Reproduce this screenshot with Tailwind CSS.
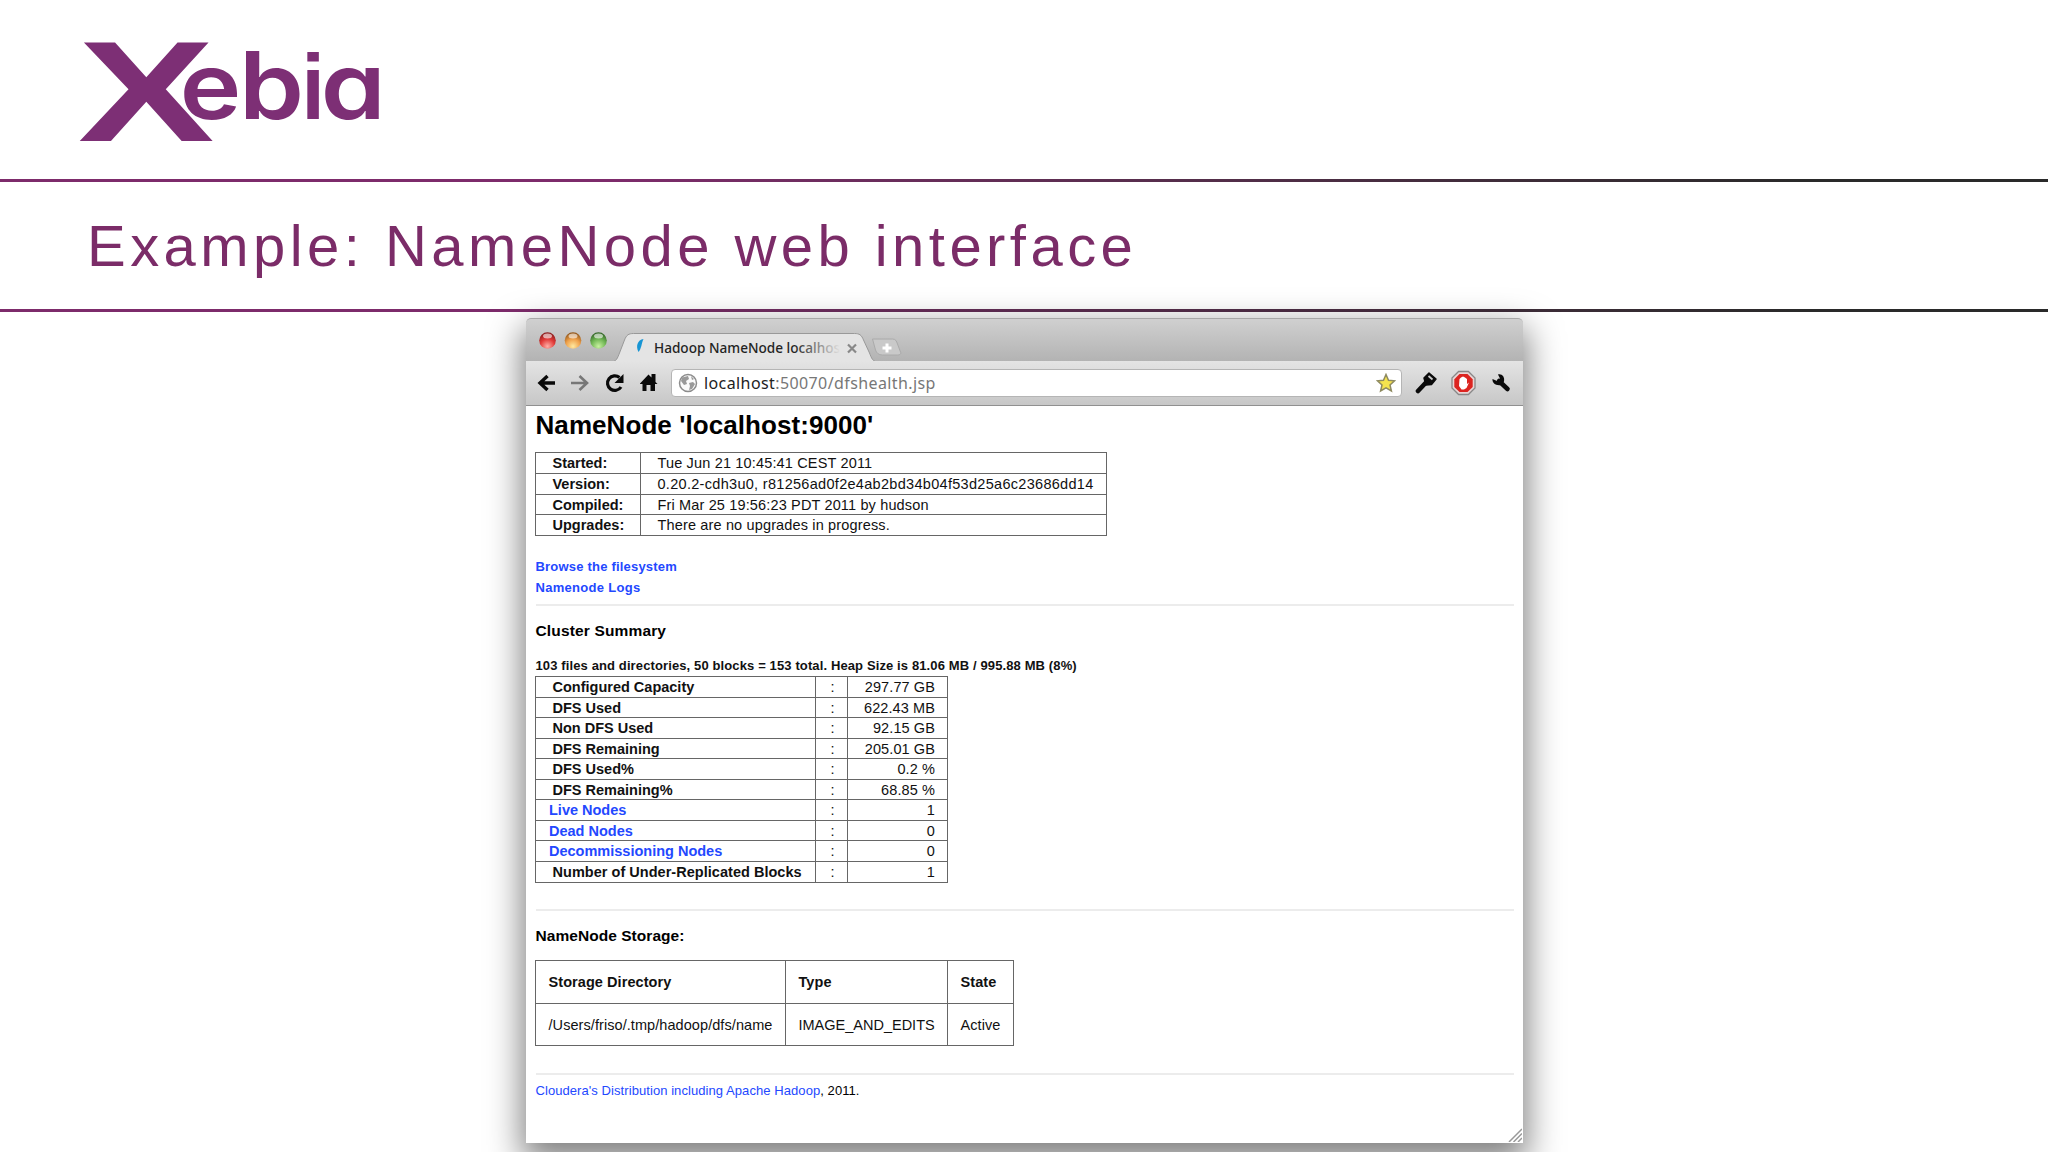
<!DOCTYPE html>
<html lang="en">
  <head>
    <meta charset="UTF-8" />
    <meta name="viewport" content="width=device-width, initial-scale=1.0" />
    <title>Example: NameNode web interface</title>
    <script src="https://cdn.jsdelivr.net/npm/@tailwindcss/browser@4"></script>
  </head>
  <body class="bg-white text-black font-['Liberation_Sans',sans-serif]">
    <div class="w-[2048px] h-[1152px] overflow-hidden flex flex-col">
      <!-- logo -->
      <header class="h-[179px] shrink-0 pl-[60px] pt-5">
        <svg class="w-[360px] h-[140px]" viewBox="0 0 360 140" fill="#7d2f75">
          <text
            transform="translate(18 120.5) scale(1.43 1)"
            font-family="Liberation Sans"
            font-weight="700"
            font-size="143"
          >X</text>
          <text
            transform="translate(0 98.5) scale(1.12 1)"
            x="107 159.800 232.800"
            font-family="Inter"
            font-weight="600"
            font-size="93"
            style="font-feature-settings: 'cv11'"
          >eba</text>
          <text
            transform="translate(241.5 98.5) scale(0.9 1)"
            font-family="Liberation Sans"
            font-weight="700"
            font-size="93"
          >i</text>
        </svg>
      </header>
      <div class="h-[3px] shrink-0 bg-linear-to-r from-[#7d2b6b] from-30% to-[#2a2a2a] to-88%"></div>
      <div class="h-[127px] shrink-0 pl-[87px] pt-[31px]">
        <h1 class="text-[58px] leading-[66px] tracking-[4.45px] text-[#7b2c68] whitespace-nowrap">Example: NameNode web interface</h1>
      </div>
      <div class="h-[3px] shrink-0 bg-linear-to-r from-[#7d2b6b] from-30% to-[#2a2a2a] to-88%"></div>

      <!-- browser window -->
      <main
        class="w-[997px] h-[825px] shrink-0 ml-[525.5px] mt-[6px] rounded-t-[5px] bg-white shadow-[0_14px_34px_4px_rgba(0,0,0,0.5)] flex flex-col relative"
      >
        <div class="h-[43px] rounded-t-[5px] bg-linear-to-b from-[#d0d0d0] to-[#b3b3b3] border-t border-[#a8a8a8]">
          <svg class="w-[400px] h-[43px]" viewBox="525.500 318 400 43">
            <defs>
              <radialGradient id="red" cx=".5" cy=".85" r=".8"><stop offset="0" stop-color="#ffb0a8" /><stop offset=".55" stop-color="#e23a38" /><stop offset="1" stop-color="#8e2020" /></radialGradient>
              <radialGradient id="amber" cx=".5" cy=".85" r=".8"><stop offset="0" stop-color="#ffe9a0" /><stop offset=".55" stop-color="#efa04a" /><stop offset="1" stop-color="#94581c" /></radialGradient>
              <radialGradient id="green" cx=".5" cy=".85" r=".8"><stop offset="0" stop-color="#c8f2a0" /><stop offset=".55" stop-color="#70b654" /><stop offset="1" stop-color="#36692a" /></radialGradient>
              <linearGradient id="fade" x1="654" x2="840" y1="0" y2="0" gradientUnits="userSpaceOnUse"><stop offset=".75" stop-color="#222" /><stop offset="1" stop-color="#222" stop-opacity="0" /></linearGradient>
            </defs>
            <circle cx="547" cy="339.500" r="8.300" fill="url(#red)" />
            <circle cx="572.500" cy="339.500" r="8.300" fill="url(#amber)" />
            <circle cx="598" cy="339.500" r="8.300" fill="url(#green)" />
            <ellipse cx="547" cy="335" rx="4.500" ry="2.500" fill="#fff" opacity=".6" />
            <ellipse cx="572.500" cy="335" rx="4.500" ry="2.500" fill="#fff" opacity=".6" />
            <ellipse cx="598" cy="335" rx="4.500" ry="2.500" fill="#fff" opacity=".6" />
            <path d="M525 361H610C616 361 617 357 619 352L624 339C626 334 628 332.500 633 332.500H854C859 332.500 861 334 863 339L869 352C871 357 872 361 878 361H930V370H525Z" fill="#e4e4e4" stroke="#999" />
            <path d="M872 338H892C895 338 896 340 897 343L900 351C901 353 899 354 897 354H882C878 354 876 352 875 349Z" fill="#c9c9c9" stroke="#aaa" />
            <path d="M886.500 342.500V351.500M882 347H891" stroke="#fff" stroke-width="3" />
            <path d="M643 338C637 339 635 345 638 351C641 348 641 342 643 338Z" fill="#1795d4" />
            <text x="653.500" y="352" font-family="Noto Sans" font-size="13.600" font-weight="500" fill="url(#fade)">Hadoop NameNode localhos</text>
            <path d="M847.500 343.500L855.500 351.500M855.500 343.500L847.500 351.500" stroke="#888" stroke-width="2.200" />
          </svg>
        </div>
        <div class="h-[45px] bg-linear-to-b from-[#e4e4e4] to-[#c7c7c7] border-b border-[#909090] flex items-center pl-[11.5px] pr-3">
          <svg class="w-[127px] h-6 shrink-0" viewBox="537 371 127 24" fill="none">
            <path d="M555 383H541M547.500 376L540 383L547.500 390" stroke="#0a0a0a" stroke-width="3.400" />
            <path d="M571 383H586M579.500 376L587 383L579.500 390" stroke="#777" stroke-width="2.600" />
            <path d="M621 387A7.300 7.300 0 1 1 619.500 377.500" stroke="#0a0a0a" stroke-width="3.200" />
            <path d="M623.500 374V383H614.500Z" fill="#0a0a0a" />
            <path d="M640 383.500L648.500 374.500L651.500 377.500V374H655.500V382L657.500 384H655V391H650.500V385H646.500V391H642.500V384H640Z" fill="#0a0a0a" />
          </svg>
          <div class="w-[731px] h-[28px] ml-[7px] shrink-0 bg-white border border-[#b5b5b5] rounded-[4px] flex items-center pl-[6px] pr-[5px]">
            <svg class="w-5 h-5 shrink-0" viewBox="0 0 20 20">
              <circle cx="10" cy="10" r="8.500" fill="#fafafa" stroke="#8c8c8c" stroke-width="1.500" />
              <path d="M4 4.500L10 3L11 6L8 8L9 11L6 12L3 8ZM11 10L15 9L17 11L14 16L11 17L12 13ZM13 3L16 6L14 7Z" fill="#999" />
            </svg>
            <span class="ml-[6px] grow font-['Noto_Sans',sans-serif] text-[16px] leading-6 tracking-[0.4px] text-[#777]"><span class="text-[#222]">localhost</span>:50070/dfshealth.jsp</span>
            <svg class="w-5 h-5" viewBox="0 0 20 20">
              <path d="M10 1.500L12.500 7.200L18.600 7.800L14 12L15.400 18L10 14.800L4.600 18L6 12L1.400 7.800L7.500 7.200Z" fill="#f5e34e" stroke="#8e8a60" stroke-width="1.500" />
            </svg>
          </div>
          <svg class="w-[98px] h-7 ml-[13px] shrink-0" viewBox="1415 369 98 28">
            <g transform="translate(1415 372)">
              <path d="M3 19L11 10.500" stroke="#0a0a0a" stroke-width="4.600" stroke-linecap="round" />
              <path d="M9 6L14 1L21 7L16.500 12.500L11 13Z" fill="#0a0a0a" stroke="#0a0a0a" stroke-width="1.500" stroke-linejoin="round" />
              <path d="M13.500 4L17.500 7.500" stroke="#ccc" stroke-width="1.800" />
            </g>
            <path d="M1458.600 371.500H1468.400L1475 378.100V387.900L1468.400 394.500H1458.600L1452 387.900V378.100Z" fill="#e9d5d5" stroke="#888" stroke-width="1.300" />
            <path d="M1459.500 374H1467.500L1472.700 379.200V387L1467.500 392H1459.500L1454.300 387V379.200Z" fill="#dc2420" />
            <path d="M1459.500 379L1461 377.500L1463 376.500L1465 377.500L1467 379V384L1469 382.500L1466.500 388L1464 389.500H1461.500L1459 386Z" fill="#fff" />
            <path d="M1499 381L1507.500 389" stroke="#0a0a0a" stroke-width="4.600" stroke-linecap="round" />
            <path d="M1498 374.500C1502 373.500 1505 377 1504 381.500L1501 385C1496 386 1492 383 1492.500 379L1497 381L1500 378.500Z" fill="#0a0a0a" />
          </svg>
        </div>

        <!-- dfshealth page -->
        <div class="grow flex flex-col items-start pl-[10px] pr-[9px] text-[14.5px] whitespace-nowrap">
          <h2 class="mt-[5px] h-[41px] text-[26px] leading-[28px] tracking-[0.07px] font-bold">NameNode 'localhost:9000'</h2>
          <table class="-ml-[0.5px] w-[572px] table-fixed border-collapse leading-4 text-[#111] [&_td]:border [&_td]:border-[#666] [&_td]:p-0 [&_td]:pl-[16.5px]">
            <tr class="h-[21px]"><td class="w-[105px] font-bold">Started:</td><td class="tracking-[0.16px]">Tue Jun 21 10:45:41 CEST 2011</td></tr>
            <tr class="h-[21px]"><td class="font-bold">Version:</td><td class="tracking-[0.3px]">0.20.2-cdh3u0, r81256ad0f2e4ab2bd34b04f53d25a6c23686dd14</td></tr>
            <tr class="h-[20px]"><td class="font-bold">Compiled:</td><td class="tracking-[0.15px]">Fri Mar 25 19:56:23 PDT 2011 by hudson</td></tr>
            <tr class="h-[21px]"><td class="font-bold">Upgrades:</td><td class="tracking-[0.15px]">There are no upgrades in progress.</td></tr>
          </table>
          <div class="mt-[21px] text-[13px] leading-[20.5px] tracking-[0.2px] font-bold text-[#2348ff]">
            <div>Browse the filesystem</div>
            <div class="tracking-[0.3px]">Namenode Logs</div>
          </div>
          <div class="w-full h-[2px] mt-[6px] bg-[#ececec]"></div>
          <h3 class="mt-[15px] text-[15.5px] leading-[20px] tracking-[0.15px] font-bold">Cluster Summary</h3>
          <div class="mt-[16px] text-[13px] leading-[18px] tracking-[0.12px] font-bold text-[#111]">103 files and directories, 50 blocks = 153 total. Heap Size is 81.06 MB / 995.88 MB (8%)</div>
          <table class="-ml-[0.5px] mt-px w-[413px] table-fixed border-collapse leading-4 text-[#111] [&_td]:border [&_td]:border-[#666] [&_td]:p-0 [&_td:first-child]:pl-[16.5px] [&_td:first-child]:font-bold [&_td:nth-child(2)]:text-center [&_td:nth-child(2)]:pl-[2px] [&_td:last-child]:text-right [&_td:last-child]:pr-3 [&_td:last-child]:tracking-[0.1px]">
            <tr class="h-[21px]"><td class="w-[280px]">Configured Capacity</td><td class="w-8">:</td><td>297.77 GB</td></tr>
            <tr class="h-[20px]"><td>DFS Used</td><td>:</td><td>622.43 MB</td></tr>
            <tr class="h-[21px]"><td>Non DFS Used</td><td>:</td><td>92.15 GB</td></tr>
            <tr class="h-[20px]"><td>DFS Remaining</td><td>:</td><td>205.01 GB</td></tr>
            <tr class="h-[21px]"><td>DFS Used%</td><td>:</td><td>0.2 %</td></tr>
            <tr class="h-[20px]"><td>DFS Remaining%</td><td>:</td><td>68.85 %</td></tr>
            <tr class="h-[21px]"><td><a class="-ml-[3.5px] text-[#2348ff]">Live Nodes</a></td><td>:</td><td>1</td></tr>
            <tr class="h-[20px]"><td><a class="-ml-[3.5px] text-[#2348ff]">Dead Nodes</a></td><td>:</td><td>0</td></tr>
            <tr class="h-[21px]"><td><a class="-ml-[3.5px] text-[#2348ff]">Decommissioning Nodes</a></td><td>:</td><td>0</td></tr>
            <tr class="h-[21px]"><td class="tracking-[0.03px]">Number of Under-Replicated Blocks</td><td>:</td><td>1</td></tr>
          </table>
          <div class="w-full h-[2px] mt-[26px] bg-[#ececec]"></div>
          <h3 class="mt-[15px] text-[15.5px] leading-[20px] tracking-[0.05px] font-bold">NameNode Storage:</h3>
          <table class="-ml-[0.5px] mt-[14px] w-[479px] table-fixed border-collapse leading-4 text-[#111] [&_td]:border [&_td]:border-[#666] [&_td]:p-0 [&_td]:pl-[12.5px] tracking-[0.07px]">
            <tr class="h-[43px] font-bold"><td class="w-[250px]">Storage Directory</td><td class="w-[162px]">Type</td><td>State</td></tr>
            <tr class="h-[42px]"><td>/Users/friso/.tmp/hadoop/dfs/name</td><td class="tracking-normal">IMAGE_AND_EDITS</td><td>Active</td></tr>
          </table>
          <div class="w-full h-[2px] mt-[27px] bg-[#ececec]"></div>
          <p class="mt-[7px] text-[13px] leading-[18px] tracking-[0.07px]"><a class="text-[#2348ff]">Cloudera's Distribution including Apache Hadoop</a>, 2011.</p>
        </div>
        <svg class="absolute right-px bottom-px w-[14px] h-[14px]" viewBox="0 0 14 14" stroke="#999" stroke-width="1.500">
          <path d="M1 14L14 1M5.500 14L14 5.500M10 14L14 10" />
        </svg>
      </main>
    </div>
  </body>
</html>
